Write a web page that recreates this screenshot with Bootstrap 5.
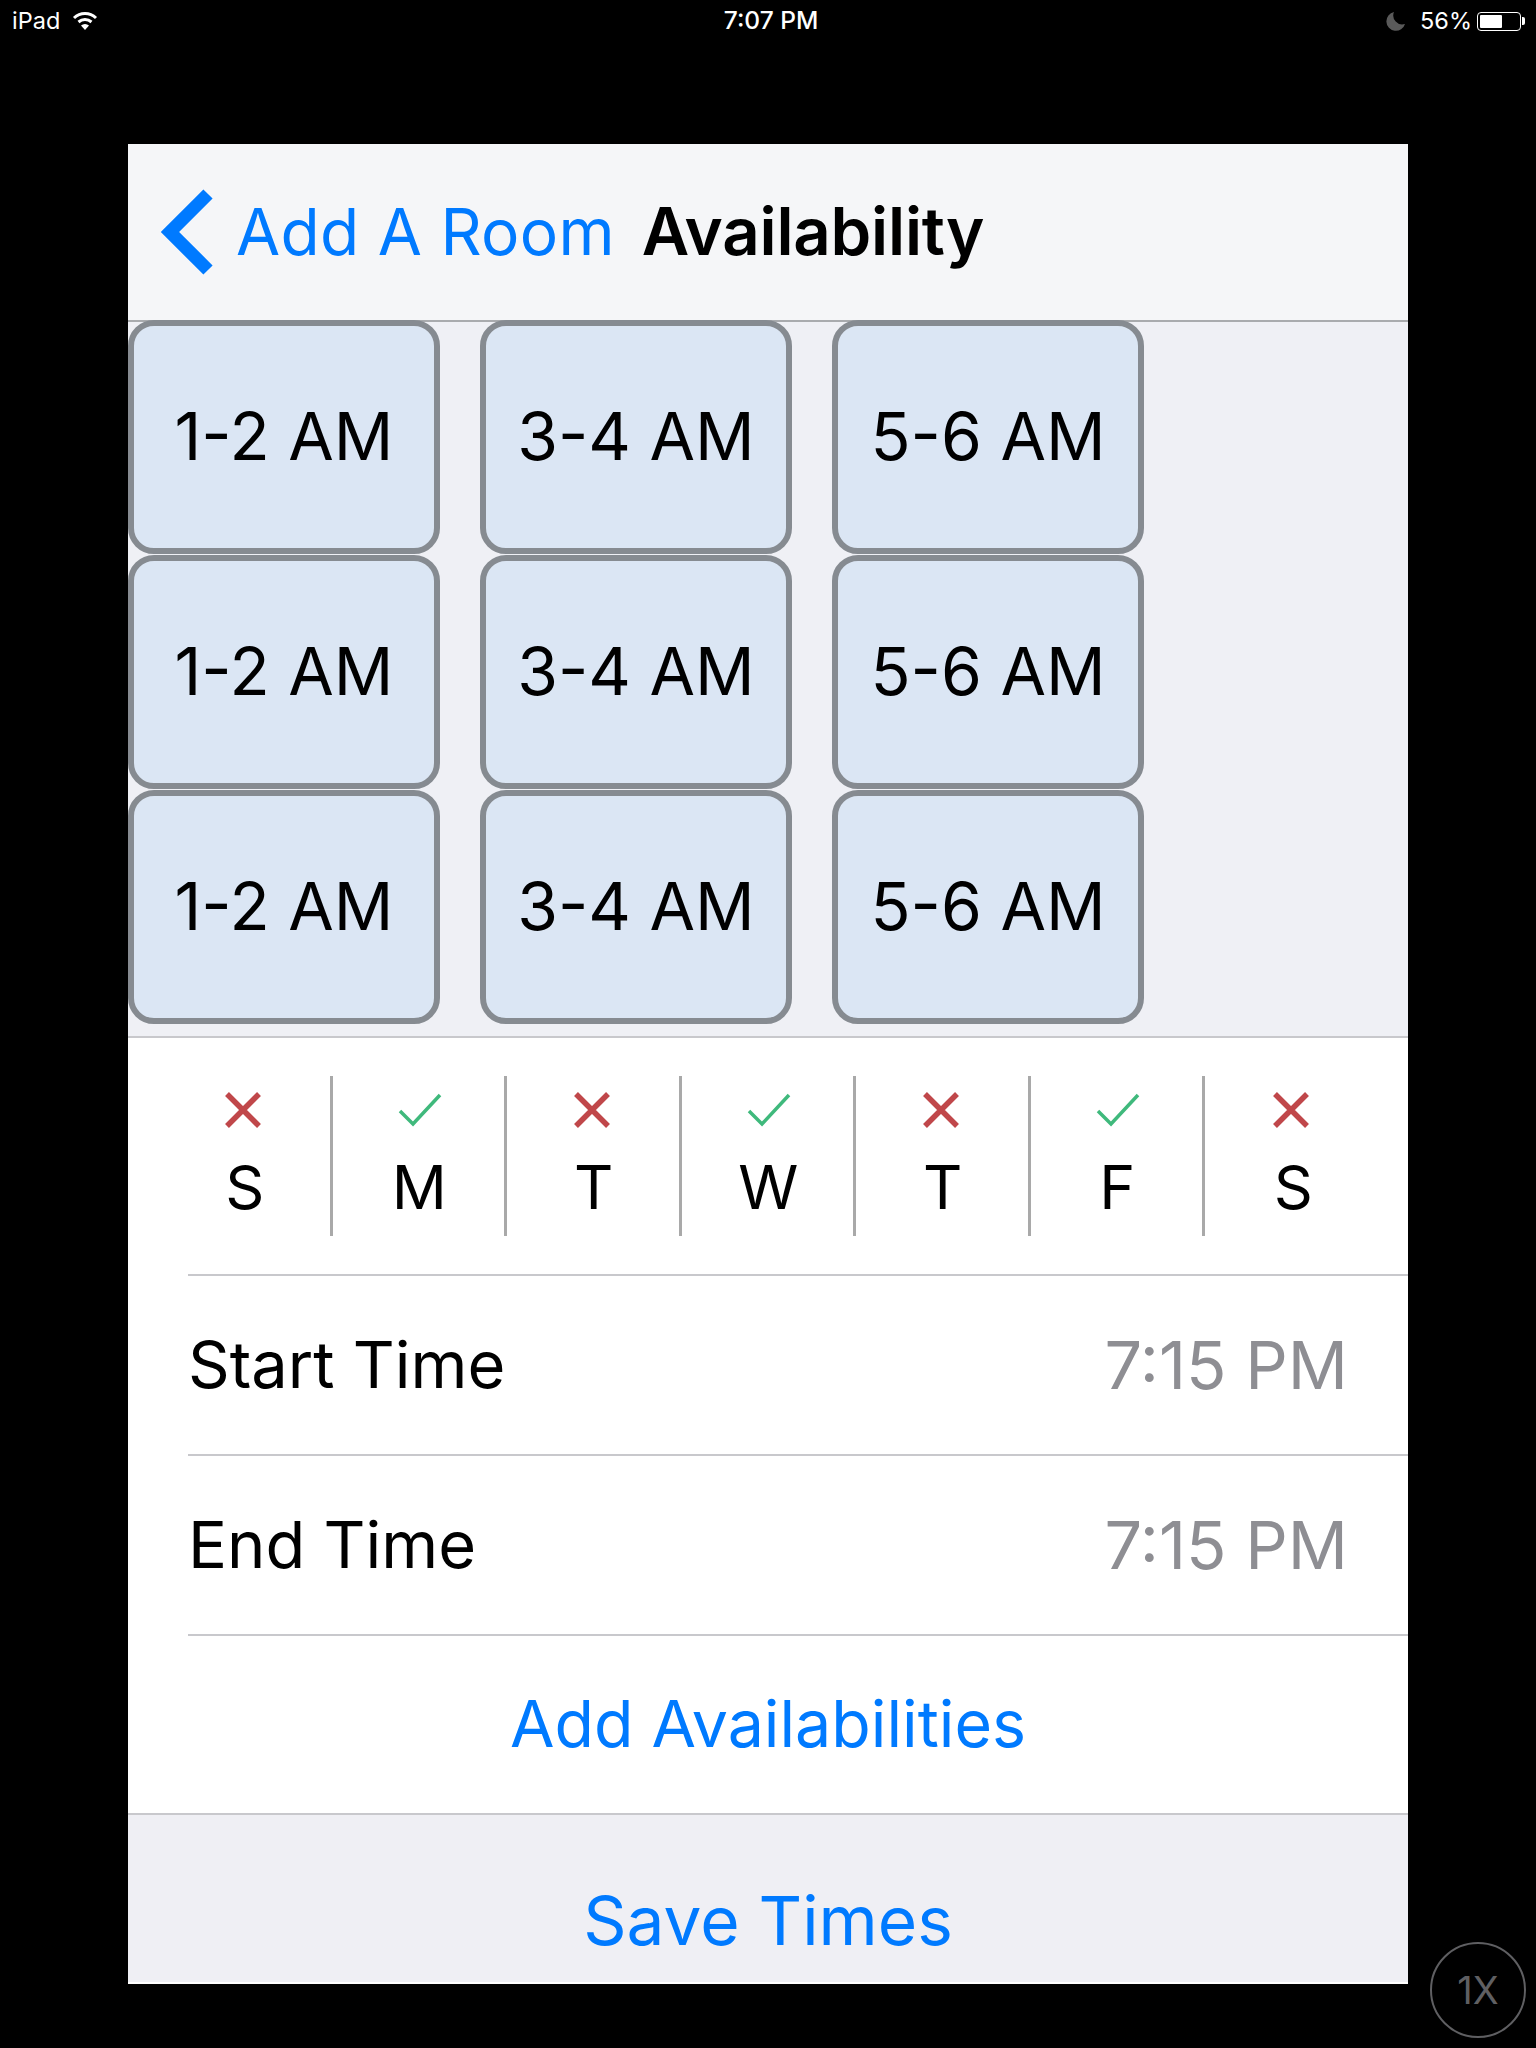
<!DOCTYPE html>
<html lang="en">
<head>
  <meta charset="UTF-8">
  <title>Availability</title>
  <meta name="viewport" content="width=device-width, initial-scale=1">
  <link href="https://cdn.jsdelivr.net/npm/bootstrap@5.3.3/dist/css/bootstrap.min.css" rel="stylesheet">
  <style>
    html, body { background: #000; }
    body { width: 1536px; height: 2048px; font-family: Inter, "Liberation Sans", sans-serif; color: #000; overflow: hidden; position: relative; }
    .status-bar { height: 144px; padding: 6px 11px 0 12px; color: #fff; font-size: 23.5px; line-height: 30px; position: relative; }
    .status-time { position: absolute; left: 0; right: 0; top: 5px; text-align: center; font-size: 24.5px; font-weight: 500; padding-left: 6px; }
    .status-moon { margin-right: 14px; }
    .batt-box { width: 44px; height: 19px; border: 1.5px solid #fff; border-radius: 4px; padding: 2px; margin-left: 5px; }
    .batt-fill { width: 22px; height: 100%; background: #fff; border-radius: 1px; }
    .batt-tip { width: 3px; height: 8px; background: #fff; border-radius: 0 2px 2px 0; margin-left: 1px; }
    .app-panel { width: 1280px; height: 1840px; margin-left: 128px; background: #fff; }
    .top-bar { height: 178px; background: #f5f6f8; border-bottom: 2px solid #a9abae; padding-left: 32px; color: #007aff; }
    .back-text { font-size: 64px; margin-left: 22px; letter-spacing: .3px; }
    .top-title { font-size: 65.3px; font-weight: 600; color: #000; margin-left: 27px; letter-spacing: -.2px; }
    .slot-area { display: flow-root; height: 716px; background: #eff0f5; border-bottom: 2px solid #c8c8cc; }
    .slot-grid { display: grid; grid-template-columns: repeat(3, 312px); grid-auto-rows: 234px; column-gap: 40px; row-gap: 1px; margin-top: -2px; position: relative; }
    .slot-btn { background: #dbe6f4; border: 6px solid #868b91; border-radius: 26px; font-size: 66px; color: #000; padding: 0 0 2px; }
    .slot-btn:hover { background: #dbe6f4; border-color: #868b91; color: #000; }
    .day-row { height: 236px; padding: 38px 0 0 30px; }
    .day-cell { width: 174.5px; height: 160px; border-right: 3px solid #a9a9a9; padding: 15px 0 0 2px; }
    .day-cell:last-child { border-right: 0; }
    .day-letter { font-size: 61px; line-height: 70px; margin-top: 23px; }
    .mark-cross { margin-right: 4px; }
    .mark-check { margin-left: 2px; }
    .form-line { height: 180px; margin-left: 60px; border-top: 2px solid #c8c8cc; padding-right: 60px; font-size: 65px; }
    .form-value { color: #8e8e93; font-size: 66.6px; }
    .add-line { height: 179px; margin-left: 60px; border-top: 2px solid #c8c8cc; color: #007aff; font-size: 64.5px; padding-right: 60px; }
    .save-bar { height: 169px; background: #efeff4; border-top: 2px solid #c8c8cc; color: #007aff; font-size: 67.6px; padding-top: 55px; }
    .zoom-badge { position: absolute; left: 1430px; top: 1942px; width: 96px; height: 96px; border: 2px solid #5f5f62; border-radius: 50%; color: #5f5f62; font-size: 38px; }
  </style>
</head>
<body>
  <div class="status-bar d-flex justify-content-between align-items-start">
    <div class="d-flex align-items-center gap-2">
      <span>iPad</span>
      <svg class="ms-1" width="26" height="20" viewBox="0 0 26 20">
        <path d="M2 7 A16 16 0 0 1 24 7" fill="none" stroke="#fff" stroke-width="3"/>
        <path d="M6.5 11 A10 10 0 0 1 19.5 11" fill="none" stroke="#fff" stroke-width="3"/>
        <path d="M9 14.500 A6 6 0 0 1 17 14.500 L13 19 Z" fill="#fff"/>
      </svg>
    </div>
    <div class="status-time">7:07 PM</div>
    <div class="d-flex align-items-center">
      <svg class="status-moon" width="20" height="20" viewBox="0 0 20 20">
        <path d="M8 1 A9.500 9.500 0 1 0 19 13 A9 9 0 0 1 8 1 Z" fill="#5a5a5a"/>
      </svg>
      <span>56%</span>
      <div class="batt-box"><div class="batt-fill"></div></div>
      <div class="batt-tip"></div>
    </div>
  </div>

  <div class="app-panel">
    <div class="top-bar d-flex align-items-center">
      <svg width="54" height="86" viewBox="0 0 54 86">
        <path d="M48 5 L10 43 L48 81" fill="none" stroke="#007aff" stroke-width="13" stroke-linejoin="miter"/>
      </svg>
      <span class="back-text">Add A Room</span>
      <span class="top-title">Availability</span>
    </div>

    <div class="slot-area">
      <div class="slot-grid">
        <button class="btn slot-btn">1-2 AM</button>
        <button class="btn slot-btn">3-4 AM</button>
        <button class="btn slot-btn">5-6 AM</button>
        <button class="btn slot-btn">1-2 AM</button>
        <button class="btn slot-btn">3-4 AM</button>
        <button class="btn slot-btn">5-6 AM</button>
        <button class="btn slot-btn">1-2 AM</button>
        <button class="btn slot-btn">3-4 AM</button>
        <button class="btn slot-btn">5-6 AM</button>
      </div>
    </div>

    <div class="day-row d-flex align-items-start">
      <div class="day-cell text-center">
        <svg class="mark-cross" width="38" height="38" viewBox="0 0 38 38"><path d="M3 3 L35 35 M35 3 L3 35" stroke="#c0474a" stroke-width="5.500" fill="none"/></svg>
        <div class="day-letter">S</div>
      </div>
      <div class="day-cell text-center">
        <svg class="mark-check" width="46" height="38" viewBox="0 0 46 38"><path d="M3 20 L16 33 L43 4" stroke="#3fb97c" stroke-width="3.500" fill="none"/></svg>
        <div class="day-letter">M</div>
      </div>
      <div class="day-cell text-center">
        <svg class="mark-cross" width="38" height="38" viewBox="0 0 38 38"><path d="M3 3 L35 35 M35 3 L3 35" stroke="#c0474a" stroke-width="5.500" fill="none"/></svg>
        <div class="day-letter">T</div>
      </div>
      <div class="day-cell text-center">
        <svg class="mark-check" width="46" height="38" viewBox="0 0 46 38"><path d="M3 20 L16 33 L43 4" stroke="#3fb97c" stroke-width="3.500" fill="none"/></svg>
        <div class="day-letter">W</div>
      </div>
      <div class="day-cell text-center">
        <svg class="mark-cross" width="38" height="38" viewBox="0 0 38 38"><path d="M3 3 L35 35 M35 3 L3 35" stroke="#c0474a" stroke-width="5.500" fill="none"/></svg>
        <div class="day-letter">T</div>
      </div>
      <div class="day-cell text-center">
        <svg class="mark-check" width="46" height="38" viewBox="0 0 46 38"><path d="M3 20 L16 33 L43 4" stroke="#3fb97c" stroke-width="3.500" fill="none"/></svg>
        <div class="day-letter">F</div>
      </div>
      <div class="day-cell text-center">
        <svg class="mark-cross" width="38" height="38" viewBox="0 0 38 38"><path d="M3 3 L35 35 M35 3 L3 35" stroke="#c0474a" stroke-width="5.500" fill="none"/></svg>
        <div class="day-letter">S</div>
      </div>
    </div>

    <div class="form-line d-flex justify-content-between align-items-center">
      <span>Start Time</span>
      <span class="form-value">7:15 PM</span>
    </div>
    <div class="form-line d-flex justify-content-between align-items-center">
      <span>End Time</span>
      <span class="form-value">7:15 PM</span>
    </div>
    <div class="add-line d-flex justify-content-center align-items-center">Add Availabilities</div>
    <div class="save-bar text-center">Save Times</div>
  </div>

  <div class="zoom-badge d-flex justify-content-center align-items-center">1X</div>
</body>
</html>
